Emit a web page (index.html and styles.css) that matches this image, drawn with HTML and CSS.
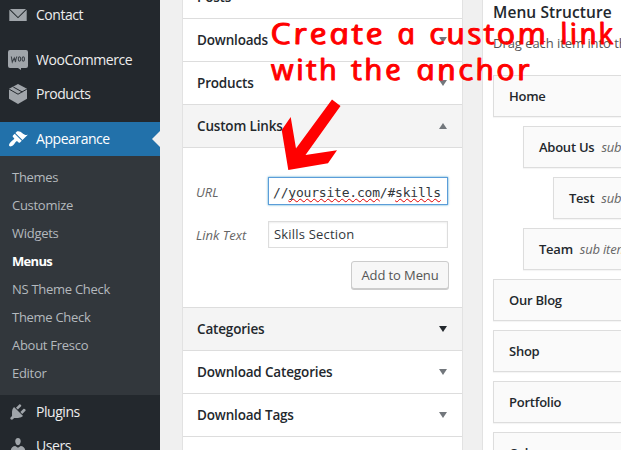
FILE: index.html
```html
<!DOCTYPE html>
<html lang="en">
<head>
<meta charset="utf-8">
<title>Menus</title>
<link rel="stylesheet" href="styles.css">
</head>
<body>
<div class="app">
  <nav class="sidebar">
    <a class="item"><svg class="icon" viewBox="0 0 20 20"><path d="M2 4h16l-8 8zM1.300 4.800 10 13.300l8.700-8.500V16H1.300z"/></svg><span>Contact</span></a>
    <div class="separator"></div>
    <a class="item woo"><svg class="icon" viewBox="0 0 20 20"><path d="M2 0h16a2 2 0 0 1 2 2v14a2 2 0 0 1-2 2h-5v2l-3-2H2a2 2 0 0 1-2-2V2a2 2 0 0 1 2-2z"/><path class="woo-mark" d="m3.300 6.500 1 5.500 2-4 1.200 4q.2-3.500 1.500-5.500"/><ellipse class="woo-mark" cx="11.500" cy="9" rx="1.200" ry="2.200"/><ellipse class="woo-mark" cx="15.300" cy="9" rx="1.200" ry="2.200"/></svg><span>WooCommerce</span></a>
    <a class="item"><svg class="icon" viewBox="0 0 20 20"><path d="m10 0 9 4.800v10L10 20l-9-5.200v-10z"/><path class="cut" d="m1.200 5.200 8.800 5 8.800-5M5.300 3l9 5"/></svg><span>Products</span></a>
    <div class="separator"></div>
    <a class="item current"><svg class="icon" viewBox="0 0 20 20"><path d="M14.480 11.060 7.410 3.990l1.500-1.500c.5-.56 2.300-.47 3.510.32 1.210.8 1.430 1.280 2.910 2.100 1.180.64 2.450 1.260 4.450.85zm-.71.710L6.700 4.700 4.930 6.470c-.39.390-.39 1.020 0 1.410l1.060 1.060c.39.390.39 1.030 0 1.420-.6.600-1.430 1.110-2.210 1.690-.35.260-.7.530-1.010.840C1.430 14.230.4 16.080 1.400 17.070c.99 1 2.840-.03 4.180-1.360.31-.31.580-.66.850-1.020.570-.780 1.080-1.610 1.690-2.210.39-.39 1.020-.39 1.410 0l1.060 1.060c.39.390 1.020.39 1.410 0z"/></svg><span>Appearance</span></a>
    <div class="submenu">
      <a>Themes</a><a>Customize</a><a>Widgets</a><a class="selected">Menus</a><a>NS Theme Check</a><a>Theme Check</a><a>About Fresco</a><a>Editor</a>
    </div>
    <a class="item"><svg class="icon" viewBox="0 0 20 20"><path d="M13.110 4.360 9.870 7.600 8 5.730l3.240-3.240c.35-.34 1.050-.2 1.560.32.520.51.660 1.210.31 1.550zm-8 1.770.91-1.120 9.010 9.010-1.190.84c-.71.710-2.630 1.160-3.820 1.160H6.140L4.900 17.260c-.59.590-1.540.59-2.120 0-.59-.58-.59-1.530 0-2.120l1.240-1.240v-3.880c0-1.130.4-3.190 1.090-3.890zm7.260 3.970 3.240-3.240c.34-.35 1.040-.21 1.550.31.520.51.660 1.210.31 1.550l-3.240 3.250z"/></svg><span>Plugins</span></a>
    <a class="item"><svg class="icon" viewBox="0 0 20 20"><path d="M10 9.250c-2.270 0-2.730-3.440-2.730-3.440C7 4.020 7.820 2 9.970 2c2.160 0 2.980 2.020 2.710 3.810 0 0-.41 3.440-2.680 3.440zm0 2.570L12.720 10c2.390 0 4.520 2.330 4.520 4.530v2.490s-3.650 1.130-7.240 1.130c-3.650 0-7.240-1.130-7.240-1.130v-2.490c0-2.250 1.940-4.480 4.470-4.480z"/></svg><span>Users</span></a>
  </nav>

  <section class="accordion">
    <h3>Posts<i class="arrow"></i></h3>
    <h3>Downloads<i class="arrow"></i></h3>
    <h3>Products<i class="arrow"></i></h3>
    <h3 class="shaded">Custom Links<i class="arrow up"></i></h3>
    <div class="link-form">
      <label class="row"><span>URL</span><div class="field focused"><b>//</b><b class="misspelt">yoursite.com</b><b>/#</b><b class="misspelt">skills</b></div></label>
      <label class="row"><span>Link Text</span><div class="field">Skills Section</div></label>
      <button>Add to Menu</button>
    </div>
    <h3 class="shaded">Categories<i class="arrow dark"></i></h3>
    <h3>Download Categories<i class="arrow"></i></h3>
    <h3>Download Tags<i class="arrow"></i></h3>
    <h3></h3>
  </section>

  <main class="structure">
    <h2>Menu Structure</h2>
    <p>Drag each item into the order you prefer.</p>
    <ul>
      <li>Home</li>
      <li class="depth-1">About Us<em>sub item</em></li>
      <li class="depth-2">Test<em>sub item</em></li>
      <li class="depth-1">Team<em>sub item</em></li>
      <li>Our Blog</li>
      <li>Shop</li>
      <li>Portfolio</li>
      <li>Columns</li>
    </ul>
  </main>
</div>

<svg class="annotation" viewBox="0 0 621 450">
  <path d="m332 99.500 8.500 6.500L305.500 155l31.500-4.700L328 163.200 288.300 170l-6.600-40 9-13 5.300 31.500z"/>
  <g transform="translate(1 43.500) skewX(13)">
    <text x="271" textLength="115" lengthAdjust="spacingAndGlyphs">Create</text><text x="398" textLength="20" lengthAdjust="spacingAndGlyphs">a</text><text x="430" textLength="119" lengthAdjust="spacingAndGlyphs">custom</text><text x="561" textLength="55" lengthAdjust="spacingAndGlyphs">link</text>
  </g>
  <g transform="translate(2 79.500) skewX(13)">
    <text x="271" textLength="68" lengthAdjust="spacingAndGlyphs">with</text><text x="351" textLength="52" lengthAdjust="spacingAndGlyphs">the</text><text x="416" textLength="116" lengthAdjust="spacingAndGlyphs">anchor</text>
  </g>
</svg>
</body>
</html>
```

FILE: styles.css
```css
* { box-sizing: border-box; }
body { margin: 0; overflow: hidden; background: #f0f0f0; color: #23282d; font: 13px/18px "Open Sans", "Noto Sans", sans-serif; }
h2, h3, p, ul { margin: 0; padding: 0; }
.app { display: flex; width: 621px; height: 450px; overflow: hidden; }

.sidebar { width: 160px; flex: none; margin-top: -2px; background: #23282d; color: #eee; }
.item { display: flex; align-items: center; height: 34px; padding-left: 8px; gap: 8px; font-size: 14px; }
.item span { letter-spacing: -.45px; }
.icon { width: 20px; height: 20px; fill: #a0a5aa; }
.separator { height: 11px; }
.woo-mark, .cut { fill: none; stroke: #23282d; stroke-width: 1; }
.woo-mark { stroke: #3c4248; stroke-width: 1.1; }
.current { position: relative; background: #2271aa; color: #fff; }
.current .icon { fill: #fff; }
.current::after { content: ""; position: absolute; right: 0; top: 9px; border: 8px solid transparent; border-left: 0; border-right-color: #f0f0f0; }
.submenu { height: 239px; padding: 7px 12px 8px; background: #32373c; color: #b4b9be; }
.submenu a { display: block; line-height: 28px; letter-spacing: -.28px; }
.submenu .selected { color: #fff; font-weight: 700; letter-spacing: -.7px; }

.accordion { width: 281px; flex: none; height: 480px; margin: -24px 0 0 22px; background: #fff; border: solid #e2e2e2; border-width: 0 1px; }
.accordion h3 { display: flex; align-items: center; justify-content: space-between; height: 43px; padding: 0 15px 0 14px; border-bottom: 1px solid #ddd; font-size: 13.500px; font-weight: 600; letter-spacing: -.17px; }
.accordion .shaded { background: #f4f4f4; }
.arrow { border: 4px solid transparent; border-top: 6px solid #72777c; border-bottom: 0; }
.arrow.up { border-top: 0; border-bottom: 6px solid #72777c; }
.arrow.dark { border-top-color: #23282d; }
.link-form { height: 160px; padding: 29px 14px 0 13px; border-bottom: 1px solid #ddd; }
.row { display: flex; align-items: center; height: 28px; margin-bottom: 15px; color: #666; }
.row > span { width: 72px; padding-top: 2px; font-style: italic; }
.field { width: 180px; height: 27px; padding: 0 5px; border: 1px solid #ddd; color: #32373c; line-height: 25px; letter-spacing: .2px; box-shadow: inset 0 1px 2px #00000012; white-space: nowrap; }
.field.focused { height: 28px; padding-left: 4px; border-color: #5b9dd9; box-shadow: 0 0 2px #1e8cbecc; font: 13px/29px "DejaVu Sans Mono", monospace; letter-spacing: -.2px; }
.field b { font-weight: 400; }
.misspelt { text-decoration: underline wavy #e00000 1px; text-underline-offset: 1px; text-decoration-skip-ink: none; }
.link-form button { display: block; width: 98px; height: 28px; margin: -2px -1px 0 auto; padding: 0; border: 1px solid #ccc; border-radius: 3px; background: #f7f7f7; color: #555; box-shadow: 0 1px 0 #ccc; font: 13px/26px "Open Sans", sans-serif; letter-spacing: -.1px; }

.structure { width: 200px; flex: none; height: 470px; margin-left: 19px; padding: 2px 0 0 10px; border-left: 1px solid #e2e2e2; background: #fff; }
.structure h2 { height: 30px; font-size: 15.500px; font-weight: 600; line-height: 20px; letter-spacing: .1px; }
.structure p { height: 43px; line-height: 23px; color: #555; white-space: nowrap; letter-spacing: -.05px; }
.structure li { height: 42px; margin-bottom: 9px; padding-left: 15px; border: 1px solid #ddd; background: #fafafa; box-shadow: 0 1px 1px #0000000a; list-style: none; font-weight: 600; line-height: 41px; letter-spacing: -.25px; white-space: nowrap; }
.structure em { margin-left: 7px; color: #666; font-weight: 400; letter-spacing: -.2px; }
.depth-1 { margin-left: 30px; }
.depth-2 { margin-left: 60px; }

.annotation { position: absolute; inset: 0; width: 621px; height: 450px; fill: red; }
.annotation text { font: italic 400 29px "Open Sans", sans-serif; letter-spacing: 2px; stroke: red; stroke-width: .9; stroke-linejoin: round; }
```
